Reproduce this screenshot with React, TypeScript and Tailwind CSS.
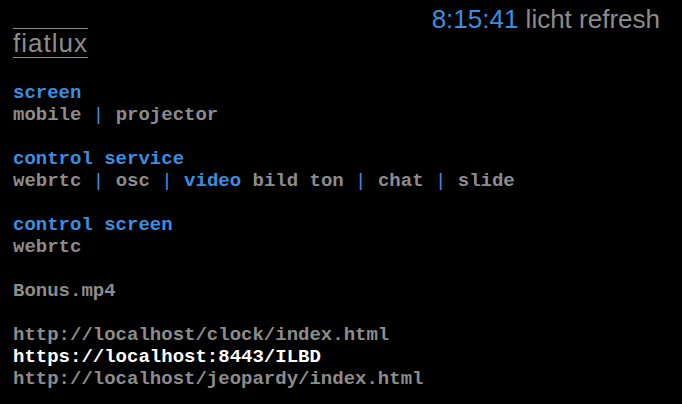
import React from 'react';

// one piece of a menu line: blue = active/heading, gray = link, white = current
type Part = { text: string; tone?: 'blue' | 'gray' | 'white'; thin?: boolean };

const tone = {
  blue: 'text-[#3a8fe2]',
  gray: 'text-[#8c8c8c]',
  white: 'text-white',
};

const Line = ({ parts }: { parts: Part[] }) => (
  <div className="h-[22px] whitespace-pre leading-[22px]">
    {parts.map((p, i) => (
      <span key={i} className={tone[p.tone || 'gray'] + (p.thin ? ' font-normal' : '')}>
        {p.text}
      </span>
    ))}
  </div>
);

const sep: Part = { text: ' | ', tone: 'blue', thin: true };

export default function App() {
  return (
    <div className="min-h-screen bg-black px-[13px] pt-[5px] font-['Liberation_Sans',Arial,sans-serif]">
      {/* clock + reload */}
      <div className="float-right mr-[9px] text-[26px] leading-[28px]">
        <span className="text-[#3a8fe2]">8:15:41</span>{' '}
        <span className="text-[#8c8c8c]">licht refresh</span>
      </div>

      <div className="pt-[23px]">
        <span className="inline-block border-y border-[#8c8c8c] text-[26px] leading-[28px] tracking-[1px] text-[#8c8c8c]">
          fiatlux
        </span>
      </div>

      <div className="mt-[23px] font-['Liberation_Mono','Courier_New',monospace] text-[19px] font-bold">
        <Line parts={[{ text: 'screen', tone: 'blue' }]} />
        <Line parts={[{ text: 'mobile' }, sep, { text: 'projector' }]} />
        <div className="h-[22px]" />

        <Line parts={[{ text: 'control service', tone: 'blue' }]} />
        <Line
          parts={[
            { text: 'webrtc' },
            sep,
            { text: 'osc' },
            sep,
            { text: 'video', tone: 'blue' },
            { text: ' bild ton' },
            sep,
            { text: 'chat' },
            sep,
            { text: 'slide' },
          ]}
        />
        <div className="h-[22px]" />

        <Line parts={[{ text: 'control screen', tone: 'blue' }]} />
        <Line parts={[{ text: 'webrtc' }]} />
        <div className="h-[22px]" />

        <Line parts={[{ text: 'Bonus.mp4' }]} />
        <div className="h-[22px]" />

        <Line parts={[{ text: 'http://localhost/clock/index.html' }]} />
        <Line parts={[{ text: 'https://localhost:8443/ILBD', tone: 'white' }]} />
        <Line parts={[{ text: 'http://localhost/jeopardy/index.html' }]} />
      </div>
    </div>
  );
}
